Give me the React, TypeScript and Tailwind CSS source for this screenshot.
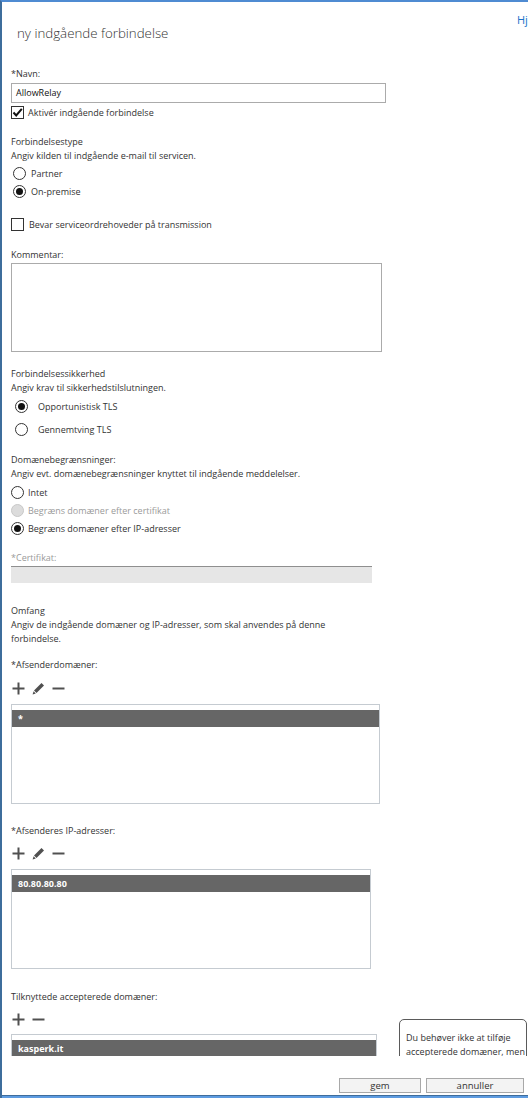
import React from "react";

const Radio = ({ checked, disabled }: { checked?: boolean; disabled?: boolean }) => (
  <span
    className={
      "flex h-[13px] w-[13px] shrink-0 items-center justify-center rounded-full border " +
      (disabled ? "border-[#c8c8c8] bg-[#dcdcdc]" : "border-[#333] bg-white")
    }
  >
    {checked && <span className="h-[7px] w-[7px] rounded-full bg-[#111]" />}
  </span>
);

const Check = ({ checked }: { checked?: boolean }) => (
  <span className="flex h-[13px] w-[13px] shrink-0 items-center justify-center border border-[#333] bg-white">
    {checked && (
      <svg width="11" height="11" viewBox="0 0 11 11">
        <path d="M1.5 5.5 L4.2 8.5 L9.8 1.8" fill="none" stroke="#111" strokeWidth="2" />
      </svg>
    )}
  </span>
);

const Plus = () => (
  <svg width="13" height="13" viewBox="0 0 13 13">
    <path d="M6.5 0.5 V12.5 M0.5 6.5 H12.5" stroke="#505050" strokeWidth="2" />
  </svg>
);
const Minus = () => (
  <svg width="13" height="13" viewBox="0 0 13 13">
    <path d="M0.5 6.5 H12.5" stroke="#505050" strokeWidth="2" />
  </svg>
);
const Pencil = () => (
  <svg width="13" height="13" viewBox="0 0 13 13">
    <path d="M9.5 1 L12 3.5 L4.5 11 L2 8.5 Z" fill="#505050" />
    <path d="M1.6 9.2 L3.8 11.4 L0.6 12.4 Z" fill="#505050" />
  </svg>
);

const Line = ({ children, className = "" }: { children: React.ReactNode; className?: string }) => (
  <div className={"h-[14px] leading-[14px] whitespace-nowrap " + className}>{children}</div>
);

const ListBox = ({ w, item, h = "h-[100px]" }: { w: string; item: string; h?: string }) => (
  <div className={"border border-[#c5cbd1] bg-white pt-[5px] " + w + " " + h}>
    <div className="h-[17px] bg-[#666666] pl-[6px] text-[9px] font-bold leading-[17px] text-white">
      {item}
    </div>
  </div>
);

export default function App() {
  return (
    <div className="relative flex h-[1098px] w-[528px] flex-col overflow-hidden border-l-2 border-t-2 border-l-[#3e6d9c] border-t-[#4f8bd2] bg-white font-['Open_Sans',sans-serif] text-[9px] text-[#333]">
      <div className="absolute left-[515px] top-[10px] text-[11px] leading-[16px] text-[#1a72c9]">Hj</div>
      <div className="relative flex-1 overflow-hidden pl-[9px]">
        <div className="ml-[6px] mt-[21px] h-[20px] text-[13.3px] font-light leading-[20px] text-[#333]">
          ny indgående forbindelse
        </div>

        <Line className="mt-[24px]">*Navn:</Line>
        <div className="mt-[2px] h-[20px] w-[375px] border border-[#ababab] pl-[4px] leading-[18px] text-[#111]">
          AllowRelay
        </div>
        <div className="mt-[3px] flex h-[13px] items-center gap-[4px]">
          <Check checked />
          <span>Aktivér indgående forbindelse</span>
        </div>

        <Line className="mt-[16px]">Forbindelsestype</Line>
        <Line>Angiv kilden til indgående e-mail til servicen.</Line>
        <div className="ml-[2px] mt-[4px] flex h-[13px] items-center gap-[5px]">
          <Radio />
          <span>Partner</span>
        </div>
        <div className="ml-[2px] mt-[5px] flex h-[13px] items-center gap-[5px]">
          <Radio checked />
          <span>On-premise</span>
        </div>

        <div className="mt-[20px] flex h-[13px] items-center gap-[5px]">
          <Check />
          <span>Bevar serviceordrehoveder på transmission</span>
        </div>

        <Line className="mt-[17px]">Kommentar:</Line>
        <div className="mt-[1px] h-[89px] w-[371px] border border-[#ababab]" />

        <Line className="mt-[15px]">Forbindelsessikkerhed</Line>
        <Line>Angiv krav til sikkerhedstilslutningen.</Line>
        <div className="ml-[4px] mt-[5px] flex h-[13px] items-center gap-[10px]">
          <Radio checked />
          <span>Opportunistisk TLS</span>
        </div>
        <div className="ml-[4px] mt-[10px] flex h-[13px] items-center gap-[10px]">
          <Radio />
          <span>Gennemtving TLS</span>
        </div>

        <Line className="mt-[17px]">Domænebegrænsninger:</Line>
        <Line>Angiv evt. domænebegrænsninger knyttet til indgående meddelelser.</Line>
        <div className="mt-[5px] flex h-[13px] items-center gap-[4px]">
          <Radio />
          <span>Intet</span>
        </div>
        <div className="mt-[5px] flex h-[13px] items-center gap-[4px]">
          <Radio disabled />
          <span className="text-[#9a9a9a]">Begræns domæner efter certifikat</span>
        </div>
        <div className="mt-[5px] flex h-[13px] items-center gap-[4px]">
          <Radio checked />
          <span>Begræns domæner efter IP-adresser</span>
        </div>

        <Line className="mt-[16px] text-[#9a9a9a]">*Certifikat:</Line>
        <div className="mt-[1px] h-[17px] w-[361px] border-t border-[#8f8f8f] bg-[#e6e6e6]" />

        <Line className="mt-[21px]">Omfang</Line>
        <Line>Angiv de indgående domæner og IP-adresser, som skal anvendes på denne</Line>
        <Line>forbindelse.</Line>

        <Line className="mt-[12px]">*Afsenderdomæner:</Line>
        <div className="ml-[1px] mt-[10px] flex h-[13px] items-center gap-[7px]">
          <Plus />
          <Pencil />
          <Minus />
        </div>
        <div className="mt-[9px]">
          <ListBox w="w-[369px]" item="*" />
        </div>

        <Line className="mt-[20px]">*Afsenderes IP-adresser:</Line>
        <div className="ml-[1px] mt-[9px] flex h-[13px] items-center gap-[7px]">
          <Plus />
          <Pencil />
          <Minus />
        </div>
        <div className="mt-[9px]">
          <ListBox w="w-[360px]" item="80.80.80.80" />
        </div>

        <Line className="mt-[21px]">Tilknyttede accepterede domæner:</Line>
        <div className="ml-[1px] mt-[9px] flex h-[13px] items-center gap-[7px]">
          <Plus />
          <Minus />
        </div>
        <div className="mt-[8px]">
          <ListBox w="w-[366px]" item="kasperk.it" />
        </div>

        <div className="absolute left-[397px] top-[1017px] h-[80px] w-[128px] rounded-[5px] border border-[#5a5a5a] bg-white px-[6px] pt-[11px]">
          <Line>Du behøver ikke at tilføje</Line>
          <Line>accepterede domæner, men</Line>
        </div>
      </div>

      <div className="flex h-[39px] shrink-0 items-end justify-end gap-[5px] pb-[2px] pr-[4px]">
        <button className="h-[15px] w-[82px] border border-[#a8a8a8] bg-[#f3f3f3] text-[9.5px] leading-[13px] text-[#333]">
          gem
        </button>
        <button className="h-[15px] w-[98px] border border-[#a8a8a8] bg-[#f3f3f3] text-[9.5px] leading-[13px] text-[#333]">
          annuller
        </button>
      </div>
      <div className="h-px shrink-0 bg-[#3e6d9c]" />
      <div className="h-[2px] shrink-0 bg-[#5d9be0]" />
    </div>
  );
}
